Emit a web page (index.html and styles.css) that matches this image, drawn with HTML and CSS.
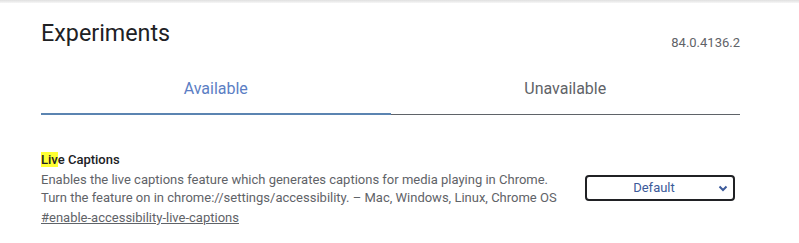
FILE: index.html
```html
<!DOCTYPE html>
<html lang="en">
<head>
  <meta charset="UTF-8" />
  <title>Experiments</title>
  <link rel="stylesheet" href="styles.css">
</head>
<body>
  <div class="top-shadow"></div>

  <div class="page">
    <div class="header">
      <h1>Experiments</h1>
      <span class="version">84.0.4136.2</span>
    </div>

    <div class="tabs">
      <div class="tab active">Available</div>
      <div class="tab">Unavailable</div>
    </div>

    <div class="experiment">
      <div class="exp-text">
        <h2><mark>Liv</mark>e Captions</h2>
        <p>Enables the live captions feature which generates captions for media playing in Chrome.
          Turn the feature on in chrome://settings/accessibility. – Mac, Windows, Linux, Chrome OS</p>
        <a href="#" class="permalink">#enable-accessibility-live-captions</a>
      </div>
      <div class="exp-select">
        <span>Default</span>
        <svg width="10" height="7" viewBox="0 0 10 7"><path d="M1.5 1.5 L5 5 L8.5 1.5" fill="none" stroke="#3c5a9a" stroke-width="2"/></svg>
      </div>
    </div>
  </div>
</body>
</html>
```

FILE: styles.css
```css
* {
  box-sizing: border-box;
}

body {
  margin: 0;
  background: #fff;
  font-family: Roboto, "Noto Sans", sans-serif;
  color: #202124;
}

.top-shadow {
  height: 3px;
  background: linear-gradient(to bottom, #e0e0e0, #f6f6f6);
}

.page {
  width: 699px;
  margin-left: 41px;
}

.header {
  display: flex;
  justify-content: space-between;
  align-items: flex-end;
  padding-top: 16px;
}

h1 {
  margin: 0;
  font-size: 23.3px;
  font-weight: 400;
  line-height: 28px;
}

.version {
  font-size: 13px;
  color: #5f6368;
  margin-bottom: -3px;
}

.tabs {
  display: flex;
  margin-top: 29px;
  border-bottom: 1px solid #5f6368;
}

.tab {
  flex: 1;
  text-align: center;
  font-size: 16px;
  color: #5f6368;
  padding: 4px 0 16px;
  line-height: 18px;
}

.tab.active {
  color: #5b7ec4;
  box-shadow: inset 0 -2px 0 #5b84b1;
  margin-bottom: -1px;
  padding-bottom: 17px;
}

.experiment {
  display: flex;
  align-items: center;
  margin-top: 36px;
}

.exp-text {
  flex: 1;
}

h2 {
  margin: 0 0 2px;
  font-size: 13px;
  font-weight: 500;
  line-height: 18px;
}

mark {
  background: #ffff33;
  color: inherit;
}

.exp-text p {
  margin: 0;
  font-size: 13px;
  line-height: 18px;
  color: #5f6368;
  width: 520px;
}

.permalink {
  font-size: 13px;
  line-height: 20px;
  color: #5f6368;
}

.exp-select {
  width: 150px;
  height: 26px;
  margin-right: 5px;
  padding-right: 12px;
  border: 2px solid #202124;
  border-radius: 4px;
  display: flex;
  align-items: center;
  justify-content: center;
  position: relative;
  font-size: 13px;
  color: #3c5a9a;
  margin-top: -4px;
}

.exp-select svg {
  position: absolute;
  right: 5px;
  top: 8px;
}
```
